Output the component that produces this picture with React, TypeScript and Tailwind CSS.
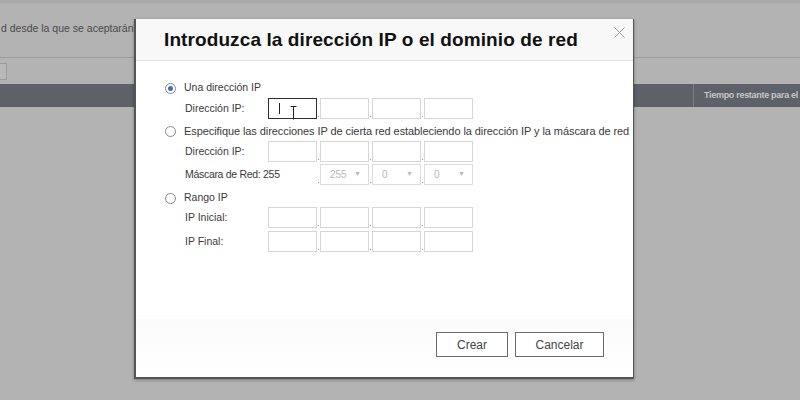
import { useState } from "react";

const FONT = { fontFamily: '"Liberation Sans", Arial, sans-serif' };

function Radio({ checked }: { checked?: boolean }) {
  return (
    <span className="w-[11px] h-[11px] rounded-full border border-[#8a8a8a] bg-white flex items-center justify-center shrink-0">
      {checked && <span className="w-[5px] h-[5px] rounded-full bg-[#3d6cc0]" />}
    </span>
  );
}

// four octet boxes separated by small dots
function Octets({ focus, kind = "input", values = ["", "", "", ""] }: { focus?: boolean; kind?: "input" | "select"; values?: string[] }) {
  return (
    <div className="flex items-end">
      {values.map((v, i) => (
        <div key={i} className="flex items-end">
          {i > 0 && <span className="w-[3px] h-[21px] flex items-end justify-center"><span className="w-px h-px bg-[#999] mb-[2px]" /></span>}
          {kind === "select" && i === 0 ? (
            <div className="w-[49px] h-[21px]" />
          ) : kind === "select" ? (
            <div className="w-[49px] h-[21px] border border-[#dcdcdc] bg-white flex items-center justify-between pl-[9px] pr-[7px] text-[10px] text-[#b8b8b8]">
              <span>{v}</span>
              <span className="text-[7px]">▼</span>
            </div>
          ) : focus && i === 0 ? (
            <div className="relative w-[49px] h-[21px] border border-[#2e2e2e] bg-white">
              <span className="absolute left-[10px] top-[4px] w-px h-[11px] bg-[#222]" />
              <svg className="absolute left-[21px] top-[7px]" width="7" height="14" viewBox="0 0 7 14">
                <path d="M0.5 0.5h6M3.5 0.5v13" stroke="#222" strokeWidth="1" fill="none" />
              </svg>
            </div>
          ) : (
            <div className="w-[49px] h-[21px] border border-[#d6d6d6] bg-white" />
          )}
        </div>
      ))}
    </div>
  );
}

function FieldRow({ label, children }: { label: React.ReactNode; children: React.ReactNode }) {
  return (
    <div className="flex items-center h-[21px] pl-[20px]">
      <span className="w-[83px] shrink-0">{label}</span>
      {children}
    </div>
  );
}

export default function App() {
  const [mode, setMode] = useState(0);

  return (
    <div className="relative w-[800px] h-[400px] overflow-hidden bg-[#b3b3b3] text-[#333]" style={FONT}>
      {/* dimmed page behind the modal */}
      <div className="h-[3px] bg-[#a9a9a9]" />
      <div className="h-[55px] border-b border-[#9c9c9c] flex items-center pl-px pb-[2px] text-[10.5px] text-[#4a4a4a] whitespace-nowrap">
        d desde la que se aceptarán conexiones
      </div>
      <div className="h-[26px] flex items-center">
        <div className="w-[7px] h-[17px] border border-l-0 border-[#9c9c9c] bg-[#b8b8b8]" />
      </div>
      <div className="h-[23px] bg-[#5f6169] flex justify-end">
        <div className="w-[107px] border-l border-[#7c7e86] flex items-center pl-[10px] text-[9px] tracking-[-0.3px] font-bold text-[#c4c6cc] whitespace-nowrap">
          Tiempo restante para el
        </div>
      </div>

      {/* modal */}
      <div className="absolute left-[134px] top-[19px] w-[500px] h-[360px] bg-white border-r border-b-2 border-l-2 border-[#555] shadow-[0_1px_3px_rgba(0,0,0,0.35)] flex flex-col">
        <div className="h-[42px] shrink-0 bg-[#f8f8f8] border-b border-[#e3e3e3] flex items-center justify-between pl-[28px] pr-[8px]">
          <h1 className="text-[19px] font-bold text-[#111] tracking-[0.1px] pt-[1px]">Introduzca la dirección IP o el dominio de red</h1>
          <svg className="self-start mt-[8px]" width="11" height="11" viewBox="0 0 11 11">
            <path d="M0.5 0.5l10 10M10.5 0.5l-10 10" stroke="#9a9a9a" strokeWidth="1" />
          </svg>
        </div>

        <div className="flex-1 pt-[20px] pl-[29px] text-[10.5px] text-[#3a3a3a] flex flex-col whitespace-nowrap">
          <label className="flex items-center gap-[8px] h-[14px]" onClick={() => setMode(0)}>
            <Radio checked={mode === 0} />
            <span>Una dirección IP</span>
          </label>
          <div className="mt-[3px]">
            <FieldRow label="Dirección IP:"><Octets focus /></FieldRow>
          </div>

          <label className="flex items-center gap-[8px] h-[14px] mt-[5px]" onClick={() => setMode(1)}>
            <Radio checked={mode === 1} />
            <span className="text-[11px] tracking-[-0.08px]">Especifique las direcciones IP de cierta red estableciendo la dirección IP y la máscara de red</span>
          </label>
          <div className="mt-[3px] flex flex-col gap-[2px]">
            <FieldRow label="Dirección IP:"><Octets /></FieldRow>
            <FieldRow label={<span className="tracking-[-0.3px]">Máscara de Red: 255</span>}>
              <Octets kind="select" values={["255", "255", "0", "0"]} />
            </FieldRow>
          </div>

          <label className="flex items-center gap-[8px] h-[14px] mt-[6px]" onClick={() => setMode(2)}>
            <Radio checked={mode === 2} />
            <span>Rango IP</span>
          </label>
          <div className="mt-[2px] flex flex-col gap-[3px]">
            <FieldRow label="IP Inicial:"><Octets /></FieldRow>
            <FieldRow label="IP Final:"><Octets /></FieldRow>
          </div>
        </div>

        <div className="h-[58px] shrink-0 bg-gradient-to-b from-[#fbfbfb] to-white flex items-start justify-end gap-[7px] pt-[13px] pr-[29px] text-[12px] text-[#444]">
          <button className="w-[72px] h-[25px] border border-[#6a6a6a] bg-white">Crear</button>
          <button className="w-[89px] h-[25px] border border-[#6a6a6a] bg-white">Cancelar</button>
        </div>
      </div>
    </div>
  );
}
